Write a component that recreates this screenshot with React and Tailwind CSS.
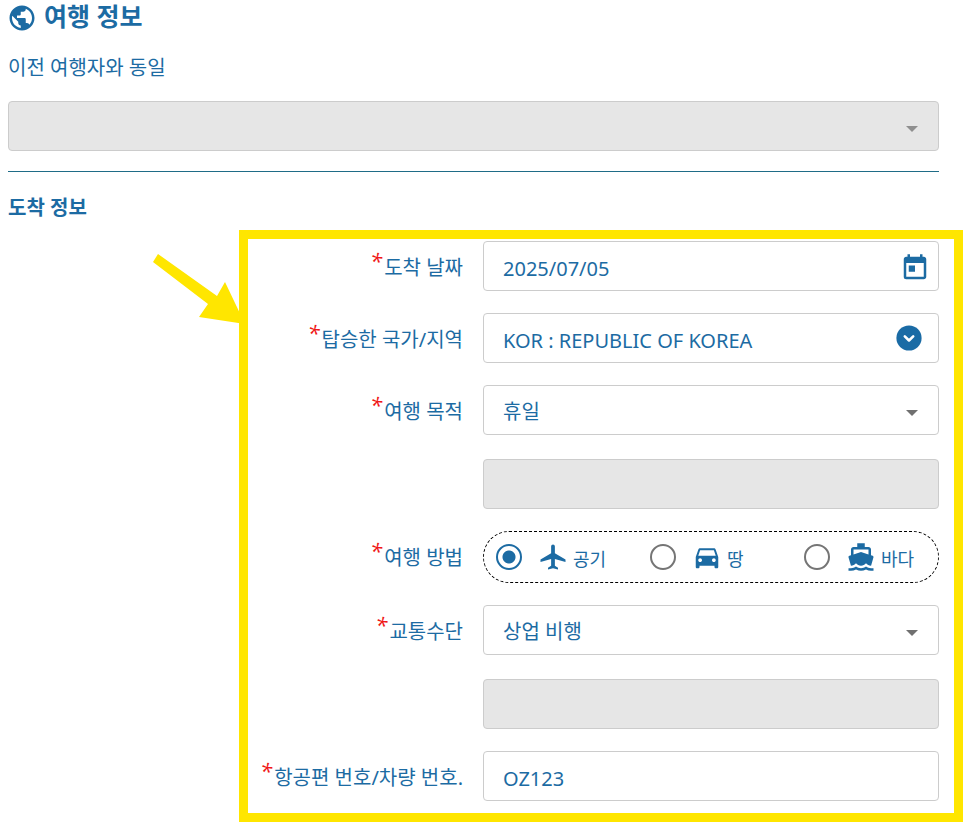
import { useState } from 'react'
import { MdDirectionsBoat, MdDirectionsCar, MdLocalAirport, MdPublic, MdToday } from 'react-icons/md'

const FIELD = 'block w-full h-[50px] rounded border border-[#cccccc] bg-white pl-[19px] pr-14 pt-1 text-xl text-[#1c6ba3] appearance-none outline-none'
const DISABLED = 'block w-full h-[50px] rounded border border-[#cccccc] bg-[#e6e6e6] px-5 appearance-none outline-none'

const TRAVEL_MODES = [
  { value: 'air', label: '공기', Icon: MdLocalAirport },
  { value: 'land', label: '땅', Icon: MdDirectionsCar },
  { value: 'sea', label: '바다', Icon: MdDirectionsBoat },
]

function Caret({ className }) {
  return (
    <svg viewBox="0 0 12 6" className={`absolute right-[21px] top-[25px] w-3 h-[6px] pointer-events-none ${className}`} aria-hidden="true">
      <path d="M0 0h12L6 6z" fill="currentColor" />
    </svg>
  )
}

function ChevronCircle() {
  return (
    <svg viewBox="0 0 26 26" className="w-[26px] h-[26px]" aria-hidden="true">
      <circle cx="13" cy="13" r="12.6" fill="#1a6ba5" />
      <path d="M8.8 11.4l4.2 4.1 4.2-4.1" fill="none" stroke="#fff" strokeWidth="2.6" strokeLinecap="round" strokeLinejoin="round" />
    </svg>
  )
}

function Star() {
  return <span className="self-start -mt-2 pr-[2px] text-[22px] leading-7 italic text-[#f01818]">*</span>
}

function Row({ id, label, children }) {
  return (
    <div className="grid grid-cols-[215px_minmax(0,1fr)] gap-5 items-start">
      <label htmlFor={id} className="flex h-[50px] items-center justify-end pt-1 whitespace-nowrap">
        <span className="flex leading-7">
          <Star />
          {label}
        </span>
      </label>
      <div className="flex flex-col gap-6">{children}</div>
    </div>
  )
}

function SelectField({ id, value }) {
  return (
    <div className="relative">
      <select id={id} className={FIELD} defaultValue={value}>
        <option value={value}>{value}</option>
      </select>
      <Caret className="text-[#707070]" />
    </div>
  )
}

function Arrow() {
  return (
    <svg viewBox="0 0 96 74" className="absolute -left-[99px] top-[11px] w-24 h-[74px]" aria-hidden="true">
      <path d="M9 4L68 46l8-14 20 42-46-7 9-13L4 12z" fill="#ffe600" />
    </svg>
  )
}

export default function App() {
  const [mode, setMode] = useState('air')

  return (
    <main className="min-h-screen bg-white pl-2 text-xl text-[#1c6ba3] font-['Noto_Sans','Noto_Sans_CJK_KR',sans-serif]">
      <div className="pr-6">
        <h1 className="flex items-center gap-[7px] h-8 text-[25px] leading-8 font-bold">
          <MdPublic size={30} className="mt-1 -ml-px" />
          여행 정보
        </h1>

        <label htmlFor="same-as" className="block mt-6 leading-6">이전 여행자와 동일</label>
        <div className="relative mt-[21px]">
          <select id="same-as" disabled className={DISABLED} />
          <Caret className="text-[#8f8f8f]" />
        </div>

        <hr className="mt-5 h-px border-0 bg-[#1f6c87]" />
        <h2 className="mt-6 leading-6 font-bold">도착 정보</h2>
      </div>

      <section className="relative mt-[10px] ml-[231px] border-[9px] border-[#ffe600] pt-[2px] pr-[15px] pb-3">
        <Arrow />
        <form className="flex flex-col gap-[22px]">
          <Row id="arrival-date" label="도착 날짜">
            <div className="relative">
              <input id="arrival-date" type="text" className={FIELD} defaultValue="2025/07/05" />
              <button type="button" aria-label="달력" className="absolute right-[9px] top-3">
                <MdToday size={30} />
              </button>
            </div>
          </Row>

          <Row id="country" label="탑승한 국가/지역">
            <div className="relative">
              <input id="country" type="text" className={FIELD} defaultValue="KOR : REPUBLIC OF KOREA" />
              <button type="button" aria-label="국가 목록" className="absolute right-[17px] top-3">
                <ChevronCircle />
              </button>
            </div>
          </Row>

          <Row id="purpose" label="여행 목적">
            <SelectField id="purpose" value="휴일" />
            <input type="text" disabled aria-label="기타 여행 목적" className={DISABLED} />
          </Row>

          <Row id="mode-air" label="여행 방법">
            <div role="radiogroup" className="grid grid-cols-[1fr_1fr_auto] items-center h-[52px] rounded-full border border-dashed border-black pl-3 pr-6">
              {TRAVEL_MODES.map(({ value, label, Icon }) => (
                <label key={value} htmlFor={`mode-${value}`} className="flex items-center text-lg whitespace-nowrap">
                  <input
                    id={`mode-${value}`}
                    type="radio"
                    name="mode"
                    value={value}
                    checked={mode === value}
                    onChange={() => setMode(value)}
                    className="appearance-none w-[26px] h-[26px] rounded-full border-2 border-[#757575] checked:border-[#1c6ba3] checked:bg-[radial-gradient(circle,#1c6ba3_6px,transparent_7px)]"
                  />
                  <Icon size={30} className="ml-4 mr-[5px]" />
                  <span className="pt-1">{label}</span>
                </label>
              ))}
            </div>
          </Row>

          <Row id="transport" label="교통수단">
            <SelectField id="transport" value="상업 비행" />
            <input type="text" disabled aria-label="기타 교통수단" className={DISABLED} />
          </Row>

          <Row id="flight-no" label="항공편 번호/차량 번호.">
            <input id="flight-no" type="text" className={FIELD} defaultValue="OZ123" />
          </Row>
        </form>
      </section>
    </main>
  )
}
